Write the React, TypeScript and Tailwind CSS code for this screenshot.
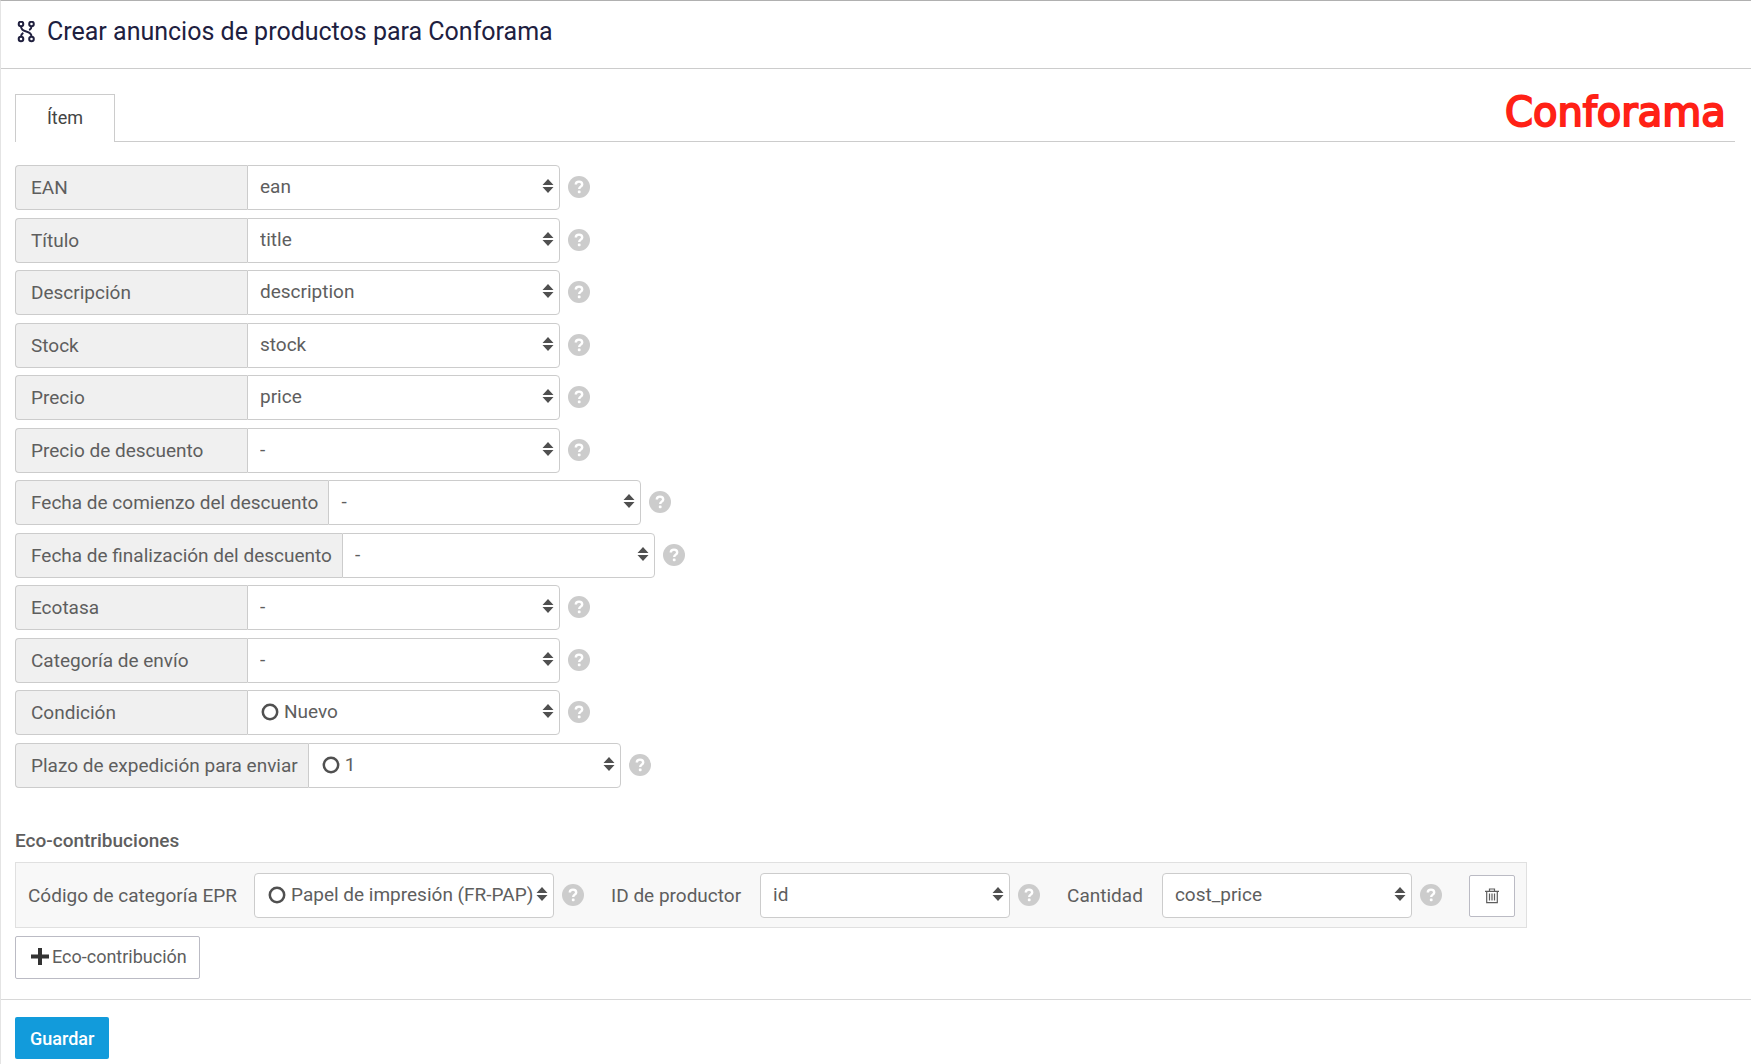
import React from 'react';
import clsx from 'clsx';

interface IField {
  id: string;
  label: string;
  value: string;
  circle?: boolean;
}

const fields: IField[] = [
  { id: 'ean', label: 'EAN', value: 'ean' },
  { id: 'title', label: 'Título', value: 'title' },
  { id: 'description', label: 'Descripción', value: 'description' },
  { id: 'stock', label: 'Stock', value: 'stock' },
  { id: 'price', label: 'Precio', value: 'price' },
  { id: 'discountPrice', label: 'Precio de descuento', value: '-' },
  { id: 'discountStart', label: 'Fecha de comienzo del descuento', value: '-' },
  { id: 'discountEnd', label: 'Fecha de finalización del descuento', value: '-' },
  { id: 'ecotax', label: 'Ecotasa', value: '-' },
  { id: 'shippingCategory', label: 'Categoría de envío', value: '-' },
  { id: 'condition', label: 'Condición', value: 'Nuevo', circle: true },
  { id: 'leadtime', label: 'Plazo de expedición para enviar', value: '1', circle: true },
];

function BranchIcon() {
  return (
    <svg
      viewBox="0 1 18 22"
      className="h-[22px] w-[18px] shrink-0"
      fill="none"
      stroke="currentColor"
      strokeWidth="2"
      aria-hidden="true"
    >
      <circle cx="4" cy="4" r="2.3" />
      <circle cx="14.5" cy="4" r="2.3" />
      <circle cx="4" cy="19" r="2.3" />
      <circle cx="14.5" cy="19" r="2.3" />
      <path d="M4 6.3c0 3.200 1.500 4.400 5.200 5.200s5.300 2 5.300 5.200M14.500 6.300c0 1.800-0.500 2.900-2.300 3.900M4 16.700c0-1.800 0.500-2.900 2.300-3.900" />
    </svg>
  );
}

function TrashIcon() {
  return (
    <svg
      viewBox="0 0 16 16"
      className="h-4 w-4"
      fill="none"
      stroke="currentColor"
      strokeWidth="1.2"
      aria-hidden="true"
    >
      <path d="M1 3.300h14M5.500 3V1h5v2M2.700 3.500v11.200h10.600V3.500" />
      <path d="M5.500 5.500v7M8 5.500v7M10.500 5.500v7" />
    </svg>
  );
}

function PlusIcon() {
  return (
    <svg viewBox="0 0 18 18" className="h-[18px] w-[18px]" fill="#333333" aria-hidden="true">
      <path d="M7 0h4v6.500h7v4h-7V17H7v-6.500H0v-4h7z" />
    </svg>
  );
}

function Help() {
  return (
    <button type="button" aria-label="Ayuda" className="h-[23px] w-[22px] shrink-0">
      <svg viewBox="0 0 22 22" className="mb-px h-[22px] w-[22px]" aria-hidden="true">
        <circle cx="11" cy="11" r="11" fill="#cccccc" />
        <path
          d="M7.800 8.600c0-1.900 1.300-3 3.200-3s3.200 1.100 3.200 2.800c0 2.200-3 2.200-3 4.500"
          fill="none"
          stroke="#ffffff"
          strokeWidth="2.400"
        />
        <rect x="9.800" y="14.400" width="2.800" height="2.800" rx="1" fill="#ffffff" />
      </svg>
    </button>
  );
}

interface ISelectProps {
  id: string;
  value: string;
  circle?: boolean;
  className?: string;
}

function Select({ id, value, circle, className }: ISelectProps) {
  return (
    <div className={clsx('relative h-[45px] border border-[#cccccc] bg-white', className)}>
      <select
        id={id}
        className={clsx(
          'h-full w-full appearance-none bg-transparent pr-4 pb-0.5 outline-none',
          circle ? 'pl-9' : 'pl-3'
        )}
      >
        <option>{value}</option>
      </select>
      {circle && (
        <svg
          viewBox="0 0 18 18"
          className="pointer-events-none absolute top-3 left-[13px] h-[18px] w-[18px]"
          fill="none"
          stroke="#505050"
          strokeWidth="2.500"
          aria-hidden="true"
        >
          <circle cx="9" cy="9" r="7.200" />
        </svg>
      )}
      <svg
        viewBox="0 0 12 14"
        className="pointer-events-none absolute top-[13px] right-[5px] h-3.5 w-3"
        fill="#505050"
        aria-hidden="true"
      >
        <path d="M6 0l5.500 6H0.500zM6 14l5.500-6H0.500z" />
      </svg>
    </div>
  );
}

function FieldRow({ id, label, value, circle }: IField) {
  return (
    <div className="flex items-center odd:mb-2 even:mb-[7px]">
      <label
        htmlFor={id}
        className="flex h-[45px] min-w-[232px] items-center rounded-l border border-r-0 border-[#cccccc] bg-[#f0f0f0] pr-2.5 pl-[15px]"
      >
        {label}
      </label>
      <Select id={id} value={value} circle={circle} className="mr-2 w-[313px] rounded-r" />
      <Help />
    </div>
  );
}

function EcoContribution() {
  return (
    <div className="flex w-fit items-center border border-[#e0e0e0] bg-[#f8f8f8] pt-2.5 pr-[11px] pb-[9px] pl-3">
      <label htmlFor="epr" className="mr-[17px]">
        Código de categoría EPR
      </label>
      <Select id="epr" value="Papel de impresión (FR-PAP)" circle className="mr-2 w-[300px] rounded" />
      <Help />
      <label htmlFor="producer" className="mr-[19px] ml-[27px]">
        ID de productor
      </label>
      <Select id="producer" value="id" className="mr-2 w-[250px] rounded" />
      <Help />
      <label htmlFor="amount" className="mr-[19px] ml-[27px]">
        Cantidad
      </label>
      <Select id="amount" value="cost_price" className="mr-2 w-[250px] rounded" />
      <Help />
      <button
        type="button"
        aria-label="Eliminar"
        className="ml-[27px] flex h-[42px] w-[46px] items-center justify-center rounded-xs border border-[#bbbbc4] bg-white"
      >
        <TrashIcon />
      </button>
    </div>
  );
}

export default function App() {
  return (
    <div className="min-h-screen border-t border-l border-t-[#b0b0b0] border-l-[#e4e4e4] bg-white font-[Roboto,sans-serif] text-[19px] leading-6 text-[#5e5e5e]">
      <header className="flex h-[68px] items-center gap-3 border-b border-[#cccccc] pb-[5px] pl-4 text-[#20203f]">
        <BranchIcon />
        <h1 className="text-[25px] leading-8">Crear anuncios de productos para Conforama</h1>
      </header>

      <form onSubmit={(e) => e.preventDefault()}>
        <div className="px-3.5 pt-[25px]">
          <div className="mr-0.5 flex items-end justify-between border-b border-[#cccccc]">
            <button
              type="button"
              className="-mb-px h-12 w-[100px] border border-b-0 border-[#cccccc] bg-white pb-0.5 text-lg leading-6 text-[#444444]"
            >
              Ítem
            </button>
            <svg
              viewBox="0 0 228 44"
              className="mr-1 mb-0.5 h-11 w-[228px] overflow-visible"
              role="img"
              aria-label="Conforama"
            >
              <text
                x="2"
                y="31"
                fill="#ff2116"
                stroke="#ff2116"
                strokeWidth="2"
                fontSize="40"
                fontFamily="DejaVu Sans, sans-serif"
              >
                Conforama
              </text>
            </svg>
          </div>

          <div className="pt-[23px]">
            {fields.map((field) => (
              <FieldRow key={field.id} {...field} />
            ))}
          </div>

          <h2 className="mt-[41px] mb-[9px] font-medium">Eco-contribuciones</h2>
          <EcoContribution />
          <button
            type="button"
            className="mt-2 flex h-[43px] items-center gap-[3px] rounded-xs border border-[#bbbbc4] bg-white pr-3 pb-px pl-[15px] text-lg leading-6"
          >
            <PlusIcon />
            Eco-contribución
          </button>
        </div>

        <footer className="mt-5 border-t border-[#d8d8d8] px-3.5 pt-[17px]">
          <button
            type="submit"
            className="h-[42px] rounded-xs bg-[#129bdb] px-[15px] pt-0.5 text-lg leading-6 font-medium text-white"
          >
            Guardar
          </button>
        </footer>
      </form>
    </div>
  );
}
